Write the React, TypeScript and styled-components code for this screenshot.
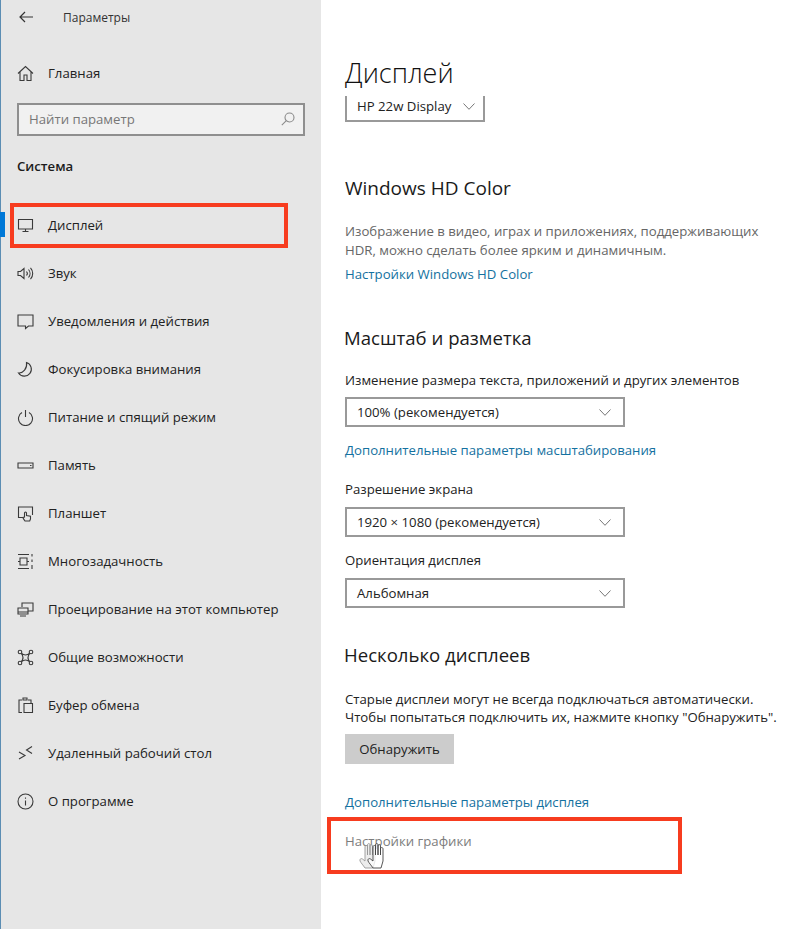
import type { ReactNode } from "react";
import styled, { createGlobalStyle } from "styled-components";

const GlobalStyle = createGlobalStyle`
  html, body {
    margin: 0;
    padding: 0;
    background: #fff;
  }
  * {
    box-sizing: border-box;
  }
`;

const Window = styled.div`
  display: flex;
  width: 800px;
  height: 929px;
  overflow: hidden;
  font-family: "Open Sans", "Noto Sans", sans-serif;
  font-size: 13.2px;
  color: #222;
`;

const Sidebar = styled.aside`
  width: 321px;
  flex-shrink: 0;
  background: #e6e6e6;
  border-left: 1px solid #5b8db3;
`;

const Header = styled.div`
  display: flex;
  align-items: center;
  height: 34px;
  padding-left: 18px;
  font-size: 12px;
  color: #333;
`;

const HeaderTitle = styled.span`
  margin-left: 30px;
`;

const Row = styled.div<{ $active?: boolean }>`
  position: relative;
  display: flex;
  align-items: center;
  height: 48px;
  padding-left: 16px;
  gap: 14px;

  &::before {
    content: "";
    display: ${({ $active }) => ($active ? "block" : "none")};
    position: absolute;
    left: -1px;
    top: 11px;
    width: 5px;
    height: 25px;
    background: #0078d7;
  }
`;

const HomeRow = styled(Row)`
  margin-top: 15px;
`;

const IconSlot = styled.span`
  display: flex;
  width: 17px;
  height: 17px;
  flex-shrink: 0;
  color: #3a3a3a;

  svg {
    width: 100%;
    height: 100%;
    fill: none;
    stroke: currentColor;
    stroke-width: 1.1;
  }
`;

const Search = styled.div`
  display: flex;
  align-items: center;
  justify-content: space-between;
  width: 288px;
  height: 33px;
  margin: 6px 0 0 16px;
  padding: 0 8px 2px 10px;
  background: #f1f1f1;
  border: 2px solid #8f8f8f;
  color: #777;
`;

const SearchIcon = styled.svg`
  width: 14px;
  height: 14px;
  fill: none;
  stroke: #8a8a8a;
  stroke-width: 1.1;
`;

const SectionTitle = styled.div`
  height: 20px;
  line-height: 20px;
  margin: 20px 0 25px 16px;
  font-weight: 600;
  color: #1c1c1c;
`;

const Highlight = styled.div`
  position: absolute;
  border: 4px solid #f73c1f;
  pointer-events: none;
`;

const NavHighlight = styled(Highlight)`
  left: 9px;
  top: 2px;
  width: 278px;
  height: 45px;
`;

const Main = styled.main`
  flex: 1;
  padding: 53px 0 0 24px;
`;

const PageTitle = styled.h1`
  margin: 0;
  font-size: 27px;
  font-weight: 300;
  line-height: 40px;
  color: #111;
`;

const Heading = styled.h2<{ $top: number; $latin?: boolean }>`
  margin: ${({ $top }) => $top}px 0 0 ${({ $latin }) => ($latin ? 0 : -1)}px;
  font-size: ${({ $latin }) => ($latin ? 19 : 18.6)}px;
  font-weight: 400;
  line-height: 28px;
  color: #1a1a1a;
`;

const Label = styled.div<{ $top: number }>`
  margin-top: ${({ $top }) => $top}px;
  line-height: 20px;
`;

const Description = styled.p<{ $top: number; $muted?: boolean }>`
  margin: ${({ $top }) => $top}px 0 0;
  line-height: ${({ $muted }) => ($muted ? 19 : 18)}px;
  color: ${({ $muted }) => ($muted ? "#666" : "#222")};
`;

const TextLink = styled.a<{ $top: number }>`
  display: block;
  margin-top: ${({ $top }) => $top}px;
  line-height: 20px;
  color: #1471a0;
`;

const DisabledWrap = styled.div`
  position: relative;
  margin-top: 19px;
  line-height: 20px;
  color: #7d7d7d;
`;

const LinkHighlight = styled(Highlight)`
  left: -18px;
  top: -14px;
  width: 355px;
  height: 57px;
`;

const Cursor = styled.svg`
  position: absolute;
  left: 13px;
  top: 10px;
  width: 30px;
  height: 28px;
  stroke-width: 0.9;
`;

const Select = styled.div<{ $top: number; $clipped?: boolean }>`
  display: flex;
  align-items: center;
  justify-content: space-between;
  width: ${({ $clipped }) => ($clipped ? 140 : 280)}px;
  height: ${({ $clipped }) => ($clipped ? 26 : 30)}px;
  margin-top: ${({ $top }) => $top}px;
  padding: ${({ $clipped }) => ($clipped ? "0 8px 4px 10px" : "0 12px 0 10px")};
  border: 2px solid #999;
  border-top-width: ${({ $clipped }) => ($clipped ? 0 : 2)}px;
  background: #fff;
`;

const Chevron = styled.svg`
  width: 12px;
  height: 7px;
  fill: none;
  stroke: #777;
  stroke-width: 1;
`;

const Button = styled.button`
  display: block;
  width: 109px;
  height: 30px;
  margin-top: 8px;
  border: none;
  background: #ccc;
  color: #222;
  font: inherit;
`;

type NavEntry = { label: string; icon: ReactNode; active?: boolean };

const navItems: NavEntry[] = [
  {
    label: "Дисплей",
    active: true,
    icon: (
      <svg viewBox="0 0 17 17">
        <path d="M1.5 2.500h14v9.500h-14zM8.500 12v2M5.500 14.500h6" />
      </svg>
    ),
  },
  {
    label: "Звук",
    icon: (
      <svg viewBox="0 0 17 17">
        <path d="M1 6.500h2.500L7 3.500v10l-3.500-3H1zM9.500 6.500a3 3 0 0 1 0 4M11.500 4.500a6 6 0 0 1 0 8M13.500 2.800a8.500 8.500 0 0 1 0 11.400" />
      </svg>
    ),
  },
  {
    label: "Уведомления и действия",
    icon: (
      <svg viewBox="0 0 17 17">
        <path d="M1 2h15v11h-4.500l-3 2.500v-2.500H1z" />
      </svg>
    ),
  },
  {
    label: "Фокусировка внимания",
    icon: (
      <svg viewBox="0 0 17 17">
        <path d="M9.500 1.500a7 7 0 1 1-8 10.500c4.500.5 9-4.500 8-10.500z" />
      </svg>
    ),
  },
  {
    label: "Питание и спящий режим",
    icon: (
      <svg viewBox="0 0 17 17">
        <path d="M8.500 1v7M5 3.500a7 7 0 1 0 7 0" />
      </svg>
    ),
  },
  {
    label: "Память",
    icon: (
      <svg viewBox="0 0 17 17">
        <path d="M1 6h15v5H1zM13 8.500h1.500" />
      </svg>
    ),
  },
  {
    label: "Планшет",
    icon: (
      <svg viewBox="0 0 17 17">
        <path d="M5.500 12.500H1.500V2h14v8M8 16c-1-1.500-2-2.500-2-3.500l1.500-.5V8a1 1 0 0 1 2 0v2.500l4 .8V14l-.8 2z" />
      </svg>
    ),
  },
  {
    label: "Многозадачность",
    icon: (
      <svg viewBox="0 0 17 17">
        <path d="M1 1.500h11M1 15.500h11M3 5h7v7H3zM1 8.500h2M10 8.500h2M15 1v2.500M15 6.500v2.500M15 12v4" />
      </svg>
    ),
  },
  {
    label: "Проецирование на этот компьютер",
    icon: (
      <svg viewBox="0 0 17 17">
        <path d="M5 6V2h11v8h-5M1 7h10v6H1zM3 15h6M1 11h10" />
      </svg>
    ),
  },
  {
    label: "Общие возможности",
    icon: (
      <svg viewBox="0 0 17 17">
        <circle cx="3" cy="3" r="1.800" />
        <circle cx="14" cy="3" r="1.800" />
        <circle cx="3" cy="14" r="1.800" />
        <circle cx="14" cy="14" r="1.800" />
        <path d="M4.300 4.300c2.500 2 5.900 2 8.400 0M4.300 12.700c2.500-2 5.900-2 8.400 0M4.300 4.300c2 2.500 2 5.900 0 8.400M12.700 4.300c-2 2.500-2 5.900 0 8.400" />
      </svg>
    ),
  },
  {
    label: "Буфер обмена",
    icon: (
      <svg viewBox="0 0 17 17">
        <path d="M5 15.500H2V3h3M11 3h3v3M6 3V1h4v2zM7 6.500h8.500v9H7z" />
      </svg>
    ),
  },
  {
    label: "Удаленный рабочий стол",
    icon: (
      <svg viewBox="0 0 17 17">
        <path d="M2 7l6 3.500-6 3.500M15 1.500L9.500 5l5.500 3.500" />
      </svg>
    ),
  },
  {
    label: "О программе",
    icon: (
      <svg viewBox="0 0 17 17">
        <circle cx="8.500" cy="8.500" r="7.500" />
        <path d="M8.500 7.500v5M8.500 4.500v1.300" />
      </svg>
    ),
  },
];

const ChevronDown = () => (
  <Chevron viewBox="0 0 12 7">
    <path d="M.5.500L6 6.300 11.500.500" />
  </Chevron>
);

const hand =
  "M7 27c-2-3-4-5-5-7-.5-2 1-3 2.500-2L7 20V6c0-2 2.500-2 2.500 0v8V4c0-2 2.500-2 2.500 0v10V5c0-2 2.500-2 2.500 0v9V8c0-2 2.500-2 2.500 0v12l-2 7z";

export default function App() {
  return (
    <>
      <GlobalStyle />
      <Window>
        <Sidebar>
          <Header>
            <svg width="14" height="12" viewBox="0 0 14 12" fill="none" stroke="#333" strokeWidth="1.200">
              <path d="M14 6H1M6 1L1 6l5 5" />
            </svg>
            <HeaderTitle>Параметры</HeaderTitle>
          </Header>
          <HomeRow>
            <IconSlot>
              <svg viewBox="0 0 17 17">
                <path d="M1 8.500L8.500 1.500 16 8.500M3 7v8.500h4V10h3v5.500h4V7" />
              </svg>
            </IconSlot>
            Главная
          </HomeRow>
          <Search>
            Найти параметр
            <SearchIcon viewBox="0 0 14 14">
              <circle cx="8.500" cy="5.500" r="4.500" />
              <path d="M5.300 8.700L.8 13.200" />
            </SearchIcon>
          </Search>
          <SectionTitle>Система</SectionTitle>
          {navItems.map((item) => (
            <Row key={item.label} $active={item.active}>
              <IconSlot>{item.icon}</IconSlot>
              {item.label}
              {item.active && <NavHighlight />}
            </Row>
          ))}
        </Sidebar>
        <Main>
          <PageTitle>Дисплей</PageTitle>
          <Select $top={3} $clipped>
            HP 22w Display
            <ChevronDown />
          </Select>

          <Heading $top={52} $latin>
            Windows HD Color
          </Heading>
          <Description $top={20} $muted>
            Изображение в видео, играх и приложениях, поддерживающих
            <br />
            HDR, можно сделать более ярким и динамичным.
          </Description>
          <TextLink $top={4}>Настройки Windows HD Color</TextLink>

          <Heading $top={40}>Масштаб и разметка</Heading>
          <Label $top={18}>Изменение размера текста, приложений и других элементов</Label>
          <Select $top={7}>
            100% (рекомендуется)
            <ChevronDown />
          </Select>
          <TextLink $top={13}>Дополнительные параметры масштабирования</TextLink>
          <Label $top={19}>Разрешение экрана</Label>
          <Select $top={8}>
            1920 × 1080 (рекомендуется)
            <ChevronDown />
          </Select>
          <Label $top={13}>Ориентация дисплея</Label>
          <Select $top={8}>
            Альбомная
            <ChevronDown />
          </Select>

          <Heading $top={33}>Несколько дисплеев</Heading>
          <Description $top={21}>
            Старые дисплеи могут не всегда подключаться автоматически.
            <br />
            Чтобы попытаться подключить их, нажмите кнопку "Обнаружить".
          </Description>
          <Button>Обнаружить</Button>
          <TextLink $top={28}>Дополнительные параметры дисплея</TextLink>
          <DisabledWrap>
            Настройки графики
            <LinkHighlight />
            <Cursor viewBox="0 0 30 28">
              <path d={hand} fill="#e4e4e4" fillOpacity="0.7" stroke="#999" />
              <path d={hand} transform="translate(8 0)" fill="#fff" fillOpacity="0.75" stroke="#444" />
            </Cursor>
          </DisabledWrap>
        </Main>
      </Window>
    </>
  );
}
